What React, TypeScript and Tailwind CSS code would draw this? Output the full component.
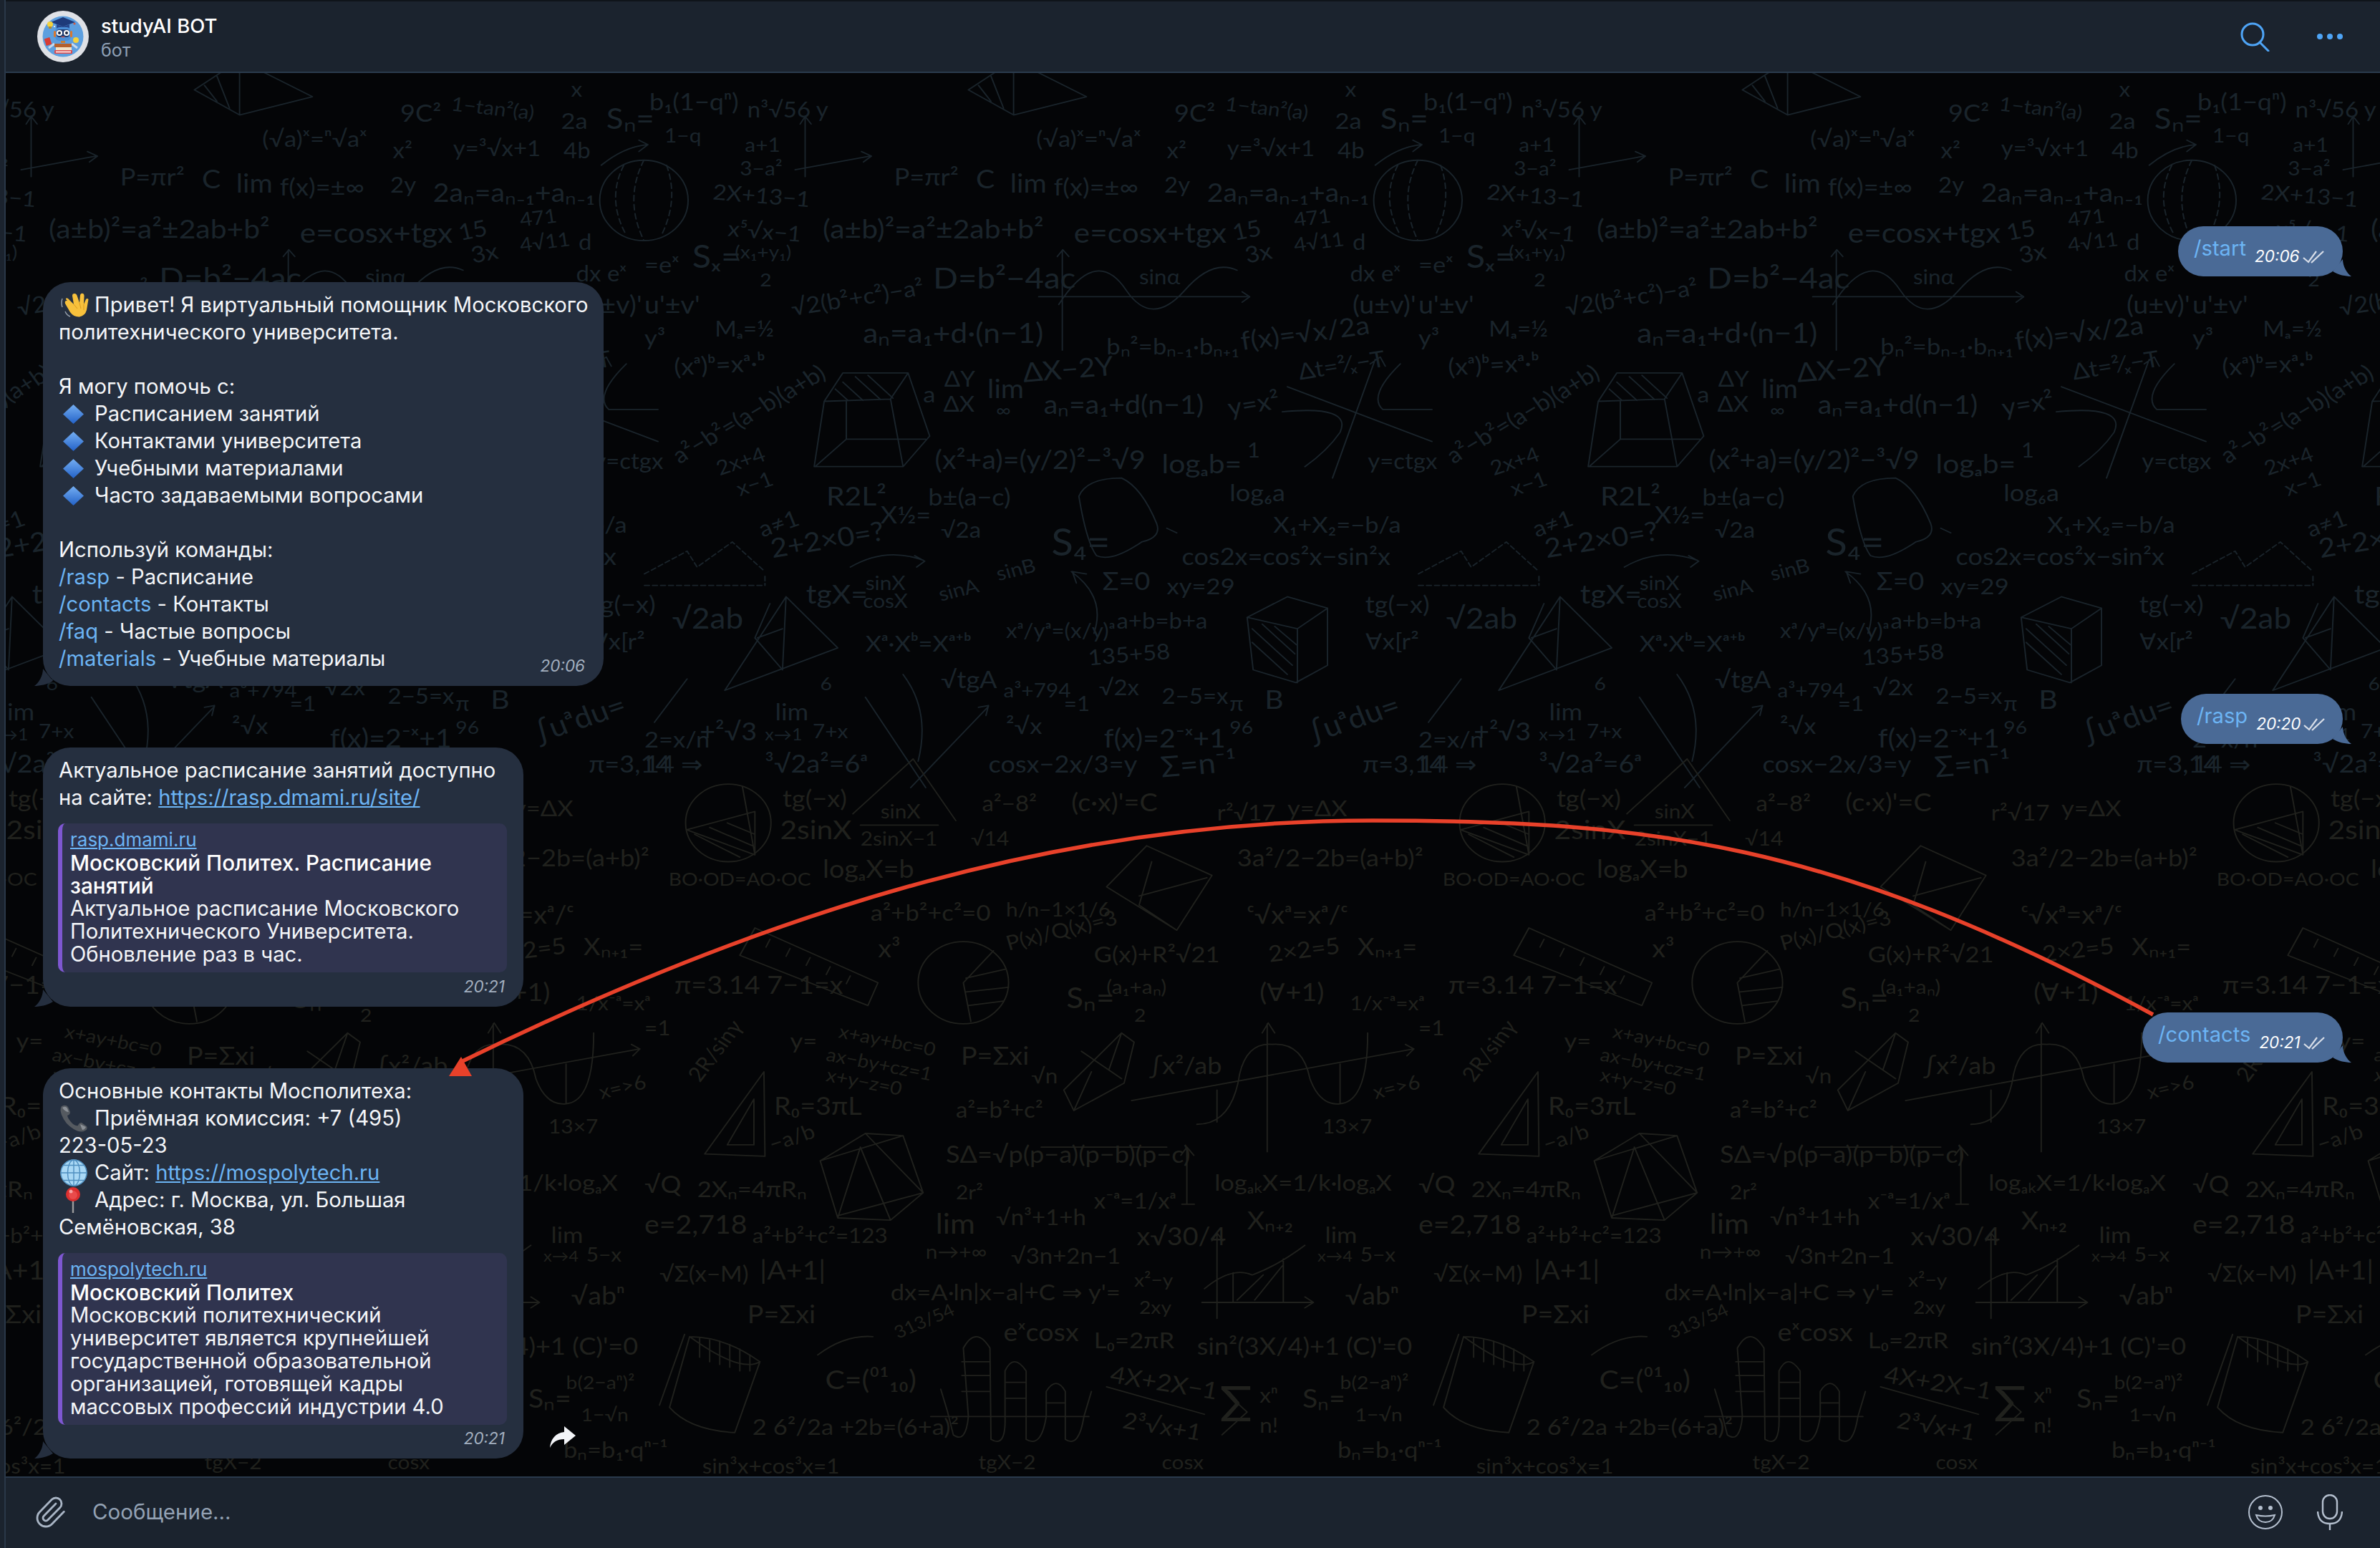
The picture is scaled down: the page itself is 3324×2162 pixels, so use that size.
import React from "react";
import { Paperclip } from "lucide-react";

type D = [number, number, string, number, number?];

const topItems: D[] = [
  [10,85,"b₁(1−qⁿ)",46],[205,100,"n³√56 y",42],[40,155,"1−q",38],[200,175,"a+1",38],[190,228,"3−a²",38],
  [135,280,"2X+13−1",42,5],[165,360,"x⁵√x−1",42,5],[497,250,"P=πr²",46],[660,255,"C",50],[728,265,"lim",50],
  [815,272,"f(x)=±∞",46],[780,165,"(√a)ˣ=ⁿ√aˣ",44],[1055,110,"9C²",46],[1155,85,"1−tan²(a)",38,7],[1160,185,"y=³√x+1",42],
  [1040,190,"x²",42],[1035,265,"2y",42],[1120,285,"2aₙ=aₙ₋₁+aₙ₋₁",50],[1395,55,"x",40],[1375,125,"2a",44],[1380,190,"4b",42],
  [1465,125,"Sₙ=",56],[355,365,"(a±b)²=a²±2ab+b²",52],[855,375,"e=cosx+tgx",54],[1175,370,"15",44,-12],[1200,420,"3x",44,-12],
  [1295,340,"471",38,-8],[1295,395,"4√11",38,-8],[1410,390,"d",42],[1405,460,"dx eˣ",42],[0,440,"=eˣ",44],[95,430,"Sₓ=",62],
  [180,410,"(x₁+y₁)",36],[230,470,"2",36],[575,475,"D=b²−4ac",58],[985,465,"sinα",40],[140,580,"Mₐ=½",42],
  [295,535,"√2(b²+c²)−a²",44,-10],[435,595,"aₙ=a₁+d·(n−1)",54],[920,620,"bₙ²=bₙ₋₁·bₙ₊₁",44],[1190,610,"f(x)=√x/2a",50,-8],
  [1410,530,"(u±v)'",48],[0,530,"u'±v'",48],[0,600,"y³",44],[60,665,"(xᵃ)ᵇ=xᵃ·ᵇ",46,-3],[70,860,"a²−b²=(a−b)(a+b)",44,-33],
  [555,725,"a",44],[597,690,"ΔY",42],[595,745,"ΔX",42],[683,715,"lim",50],[700,755,"∞",36],[755,680,"ΔX−2Y",52,-5],
  [795,750,"aₙ=a₁+d(n−1)",50],[1165,755,"y=x²",48,-10],[1305,675,"Δt=²⁄ₓ−T",44,-10],[578,870,"(x²+a)=(y/2)²−³√9",50],
  [1030,880,"logₐb=",52],[1200,845,"1",40],[1165,940,"log₆a",46],[1440,870,"y=ctgx",42],[150,885,"2x+4",40,-20],[190,930,"x−1",40,-20],
  [362,950,"R2L²",52],[470,990,"X½=",46],[565,950,"b±(a−c)",46],[590,1020,"√2a",42],[255,1065,"2+2×0=?",52,-10],[235,1020,"a≠1",44,-20],
  [810,1060,"S₄=",72],[1252,1010,"X₁+X₂=−b/a",44],[1070,1080,"cos2x=cos²x−sin²x",46],[912,1135,"Σ=0",48],[1040,1145,"xy=29",44],
  [940,1220,"a+b=b+a",42],[322,1165,"tgX=",52],[440,1135,"sinX",38],[435,1175,"cosX",38],[590,1160,"sinA",38,-15],[705,1115,"sinB",38,-15],
  [440,1270,"Xᵃ·Xᵇ=Xᵃ⁺ᵇ",44],[720,1240,"xᵃ/yᵃ=(x/y)ᵃ",40],[885,1300,"135+58",42,-5],[905,1365,"√2x",42],[715,1370,"a³+794",38],[835,1400,"=1",40],
  [720,1450,"²√x",44],[590,1350,"√tgA",46],[1030,1385,"2−5=x",42],[915,1480,"f(x)=2⁻ˣ+1",50],[1165,1400,"π",40],[1165,1450,"96",36],
  [1235,1395,"B",52],[1330,1470,"∫uᵃdu=",56,-20],[1435,1185,"tg(−x)",46],[1435,1265,"∀x[r²",44],[55,1220,"√2ab",56],[260,1420,"lim",46],
  [240,1465,"x→1",32],[350,1355,"6",36],[335,1460,"7+x",38],[110,1465,"+²√3",48],[0,1535,"14 ⇒",46],[240,1535,"³√2a²=6ᵃ",48],[685,1535,"cosx−2x/3=y",46],
  [1030,1545,"Σ=n⁻¹",56,-5],[1430,1535,"π=3,14",46],[0,1480,"2=x/n",44],
];

const bottomItems: D[] = [
  [275,105,"tg(−x)",46],[270,175,"2sinX",52],[470,130,"sinX",38],[430,190,"2sinX−1",38],[672,115,"a²−8²",42],[850,115,"(c·x)'=C",48],
  [1140,135,"r²√17",42],[1280,125,"y=ΔX",44],[48,278,"BO·OD=AO·OC",36],[355,260,"logₐX=b",48],[650,190,"√14",38],[1180,235,"3a²/2−2b=(a+b)²",46],
  [720,345,"h/n−1×1/6",38],[450,355,"a²+b²+c²=0",44],[1200,360,"ᶜ√xᵃ=xᵃ/ᶜ",48],[465,435,"x³",48],[60,515,"π=3.14 7−1=x",48],[725,420,"P(x)/Q(x)=3",40,-15],
  [895,445,"G(x)+R²√21",44],[1245,445,"2×2=5",44,-8],[1420,430,"Xₙ₊₁=",46],[840,545,"Sₙ=",56],[920,515,"(a₁+aₙ)",38],[975,575,"2",36],
  [1225,530,"(∀+1)",48],[1405,550,"1/x⁻ᵃ=xᵃ",38],[0,605,"=1",40],[110,710,"2R/sinγ",40,-55],[290,635,"y=",44],[385,610,"x+ay+bc=0",36,12],
  [360,660,"ax−by+cz=1",36,12],[360,705,"x+y−z=0",36,12],[630,670,"P=Σxi",48],[770,710,"√n",40],[1005,690,"∫x²/ab",46],[620,785,"a²=b²+c²",42],
  [1455,745,"x=>6",38,-15],[258,780,"R₀=3πL",48],[255,860,"−a/b",40,-20],[1350,820,"13×7",38],[600,885,"SΔ=√p(p−a)(p−b)(p−c)",46],
  [1135,945,"logₐₖX=1/k·logₐX",44],[0,950,"√Q",46],[105,960,"2Xₙ=4πRₙ",44],[620,965,"2r²",38],[895,985,"x⁻ᵃ=1/xᵃ",42],[0,1040,"e=2,718",50],
  [215,1060,"a²+b²+c²=123",40],[580,1040,"lim",54],[700,1020,"√n³+1+h",42],[560,1095,"n→+∞",38],[730,1105,"√3n+2n−1",42],[980,1065,"x√30/4",48],
  [1200,1030,"Xₙ₊₂",48],[1355,1060,"lim",44],[1340,1100,"x→4",30],[1425,1100,"5−x",38],[30,1145,"√Σ(x−M)",42],[230,1140,"|A+1|",50],
  [490,1185,"dx=A·ln|x−a|+C ⇒ y'=",44],[975,1155,"x²−y",36],[985,1215,"2xy",36],[1395,1195,"√abⁿ",48],[205,1235,"P=Σxi",48],[715,1275,"eˣcosx",48],
  [895,1290,"L₀=2πR",44],[1100,1305,"sin²(3X/4)+1 (C)'=0",46],[360,1380,"C=(⁰¹₁₀)",52],[505,1270,"313/54",34,-25],[925,1365,"4X+2X−1",46,10],
  [950,1465,"2³√x+1",44,10],[1145,1450,"Σ",96],[1225,1410,"xⁿ",40],[1225,1475,"n!",40],[1310,1420,"Sₙ=",50],[1385,1380,"b(2−aⁿ)²",36],[1415,1450,"1−√n",36],
  [215,1480,"2 6²/2a +2b=(6+a)²",44],[1380,1530,"bₙ=b₁·qⁿ⁻¹",44],[115,1565,"sin³x+cos³x=1",40],[665,1555,"tgX−2",38],[1030,1555,"cosx",38],
];

function Texts({ items, color }: { items: D[]; color: string }) {
  return (
    <g fill={color} stroke="none" fontFamily="Lato, sans-serif" fontWeight={400}>
      {items.map(([x, y, s, size, r], i) => (
        <text key={i} x={x} y={y} fontSize={size * 1.12} transform={r ? `rotate(${r} ${x} ${y})` : undefined}>
          {s}
        </text>
      ))}
    </g>
  );
}

function Tile() {
  return (
    <>
      <g transform="translate(0,-2) scale(0.7015,0.6378)" stroke="#1a242b" strokeWidth={2.8} fill="none" strokeLinecap="round" strokeLinejoin="round">
        <Texts items={topItems} color="#1a242b" />
        <circle cx="1540" cy="282" r="88" />
        <path d="M1540 194 Q1500 280 1540 370 M1500 205 Q1465 280 1505 358 M1585 205 Q1610 280 1575 358" strokeDasharray="12 8" />
        <path d="M1455 205 Q1500 165 1545 160 M1530 150 L1548 160 L1530 175" />
        <path d="M645 40 L735 -25 L880 55 L735 95 Z M735 -25 L735 95 M665 30 L690 65 M690 10 L715 80" />
        <path d="M320 230 V100 M310 115 L320 98 L332 115 M300 215 L450 185 M432 175 L452 185 L436 198" />
        <path d="M395 660 H525 L490 717 L358 722 Z M358 722 L338 865 H515 L568 798 L525 660 M490 717 L515 865 M402 722 V805 H560 M402 805 L340 865" />
        <path d="M420 668 L470 718 M445 665 L495 715 M395 680 L435 720 M380 695 L405 720" />
        <path d="M785 493 H1200 M1190 482 L1205 493 L1190 505 M832 610 V392 M822 405 L833 390 L845 405 M825 510 Q900 380 960 480 Q1010 560 1075 480 Q1130 410 1180 435" />
        <path d="M1280 690 L1568 810 M1455 630 L1370 890 M1445 640 L1465 625 L1475 645 M1270 745 Q1410 730 1385 790 Q1360 830 1315 865 M1505 640 Q1440 710 1470 740 H1568" />
        <path d="M865 930 Q880 890 950 890 Q990 910 1020 990 Q1030 1020 990 1030 Q930 1075 900 1060 Q880 1030 865 930 Z" />
        <path d="M0 1125 H240 M240 1105 V1125 M0 1100 L85 1050 L105 1085 L175 1030 L240 1095" strokeDasharray="10 6" />
        <path d="M410 1085 Q480 1040 555 1070 M538 1060 L558 1072 L542 1085 M850 1095 Q920 1150 895 1230 M852 1095 L880 1100 M852 1095 L860 1120" />
        <path d="M282 1150 L385 1262 L160 1355 Z M282 1150 L275 1310 M250 1165 L220 1240 L275 1310 M225 1240 L275 1220" />
        <path d="M1200 1195 L1280 1150 L1360 1175 L1300 1220 Z M1200 1195 L1212 1310 L1297 1338 L1360 1300 V1175 M1300 1220 V1338" />
        <path d="M1210 1220 L1290 1300 M1210 1250 L1280 1320 M1230 1210 L1295 1275 M1255 1215 L1298 1255" />
        <path d="M440 1370 L560 1568 M530 1568 L685 1390 M665 1392 L685 1388 L680 1410 M515 1320 Q570 1400 545 1510" />
        <path d="M20 1425 L85 1330 M1040 1000 L1060 1010" />
      </g>
      <g transform="translate(0,958) scale(0.7015,0.6378)" stroke="#20211d" strokeWidth={2.8} fill="none" strokeLinecap="round" strokeLinejoin="round">
        <Texts items={bottomItems} color="#20211d" />
        <circle cx="167" cy="140" r="85" />
        <path d="M84 155 L220 115 V210 Z M100 165 L190 215 M130 150 L215 190 M165 140 L220 165 M195 60 L220 210" />
        <path d="M415 120 L535 0 L620 135 M430 145 H585" />
        <path d="M920 280 L1000 190 M1000 190 L1130 255 L1060 375 L920 280 M985 300 L1120 260 M1010 225 L985 320 L1060 375" />
        <circle cx="635" cy="490" r="90" />
        <path d="M635 490 L695 420 M635 490 L650 575 M640 480 L720 460 M640 510 L725 500 M645 540 L715 530" />
        <path d="M190 430 L220 370 L465 490 L445 540 Z M250 395 L242 412 M290 415 L282 432 M330 435 L322 452 M370 455 L362 472 M410 475 L402 492" />
        <path d="M120 865 L238 685 L240 870 Z M165 845 L218 745 L218 845 Z" />
        <path d="M835 725 L950 600 L975 620 L955 710 L855 770 Z M870 640 L950 700 M950 600 L925 680 M855 770 L890 685" />
        <path d="M970 748 L1530 635 M1515 625 L1532 635 L1518 650 M1240 860 V580 M1230 600 L1242 578 L1255 600 M1100 800 Q1170 800 1185 690 Q1200 620 1250 625 Q1310 620 1325 700 Q1345 760 1385 755 Q1440 750 1440 600 M1140 725 L1140 795 M1385 668 V755" />
        <path d="M350 880 L440 820 L515 825 L555 950 L490 1010 L385 1005 Z M430 850 L385 1005 M430 850 L490 1010 M440 820 L555 950 M385 1000 L555 950 M515 825 L350 880" />
        <path d="M1080 850 V975 M1068 868 L1080 850 L1094 868 M1070 975 H1095" />
        <path d="M1110 1190 H1330 M1315 1178 L1332 1190 L1315 1202 M1140 1040 V1225 M1130 1055 L1140 1038 L1152 1055 M1115 1160 Q1170 1110 1210 1130 Q1260 1110 1315 1065 M1172 1125 V1188 M1272 1095 V1188 M1180 1185 L1232 1130 M1215 1185 L1270 1110" />
        <path d="M90 1265 Q160 1265 230 1320 Q190 1345 90 1265 M90 1265 L50 1420 Q90 1470 180 1475 L230 1320 M30 1415 L80 1260" />
        <path d="M110 1268 V1310 M130 1272 V1320 M150 1275 V1326 M170 1282 V1332 M190 1292 V1340 M210 1305 V1340" />
        <path d="M570 1440 H885 M590 1380 Q605 1430 615 1480 Q640 1500 645 1440 L635 1290 Q660 1240 688 1290 L690 1490 Q720 1510 718 1440 V1340 Q735 1300 760 1340 V1490 Q790 1510 800 1440 V1385 Q820 1350 838 1385 V1490 Q865 1510 875 1440 L890 1385" />
        <path d="M632 1320 H688 M632 1350 H688 M632 1385 H688 M720 1365 H760 M720 1400 H760 M800 1410 H838" />
        <path d="M920 1375 L1115 1435 M1150 1380 L1200 1430 L1150 1480 M345 1305 Q400 1260 455 1265 M1040 850 H790" />
      </g>
    </>
  );
}

function Wave() {
  return (
    <svg viewBox="0 0 40 34" className="w-[40px] h-[34px]">
      <path d="M3 8 Q1 14 3 20 M7 26 Q9 31 14 33" stroke="#9aa3ad" strokeWidth="1.4" fill="none" />
      <path d="M11 8 L19 16 L17 4 Q17 1 20 1 Q23 1 24 5 L27 14 L28 3 Q29 0 32 1 Q34 2 33.5 6 L33 16 L36 9 Q38 7 39.5 9 L37 24 Q35 32 27 33.5 Q19 34 14 27 L7 15 Q6 11 9 11 Q12 11 15 16 L8 9 Q8 6 11 8 Z" fill="#f8c13c" />
      <path d="M19 16 L24 22 M27 14 L29 22 M33 16 L33 24" stroke="#d99a1e" strokeWidth="1" fill="none" />
    </svg>
  );
}
function Diamond() {
  return (
    <svg viewBox="0 0 29 27" className="w-[29px] h-[27px]">
      <defs>
        <linearGradient id="dia" x1="0" y1="0" x2="0" y2="1">
          <stop offset="0" stopColor="#74aef2" />
          <stop offset="1" stopColor="#2362c8" />
        </linearGradient>
      </defs>
      <path d="M14.5 0 L29 13.5 L14.5 27 L0 13.5 Z" fill="url(#dia)" />
    </svg>
  );
}
function Phone() {
  return (
    <svg viewBox="0 0 40 38" className="w-[40px] h-[38px]">
      <path d="M3 2 Q9 -1 12 3 L15 10 Q15 14 11 15 Q12 20 18 26 Q23 30 26 29 Q27 25 31 25 L38 30 Q40 34 36 36 Q30 40 20 34 Q8 27 3 14 Q0 6 3 2 Z" fill="#555a60" />
      <path d="M4 4 Q9 1 11 5 L13 10 Q8 10 4 4 Z M29 27 L37 31 Q35 35 32 35 Q30 31 29 27 Z" fill="#8b9096" />
    </svg>
  );
}
function Globe() {
  return (
    <svg viewBox="0 0 40 40" className="w-[40px] h-[38px]">
      <circle cx="20" cy="20" r="19.5" fill="#a9d8f5" />
      <g fill="none" stroke="#4f8fc0" strokeWidth="1.5">
        <circle cx="20" cy="20" r="19" />
        <ellipse cx="20" cy="20" rx="9" ry="19" />
        <path d="M20 1 V39 M1 20 H39 M5 9 H35 M5 31 H35" />
      </g>
    </svg>
  );
}
function Pin() {
  return (
    <svg viewBox="0 0 24 36" className="w-[24px] h-[36px]">
      <path d="M12 18 V36" stroke="#9c9c9c" strokeWidth="2.4" />
      <circle cx="12" cy="10" r="10" fill="#db2f2f" />
      <circle cx="12" cy="11" r="6" fill="#e94b4b" />
      <circle cx="9" cy="6" r="2.5" fill="#f6a3a3" />
    </svg>
  );
}

function Emoji({ children, pad = 1 }: { children: React.ReactNode; pad?: number }) {
  return (
    <span className="inline-flex w-[50px] h-[38px] items-center justify-start align-top" style={{ paddingLeft: pad }}>
      {children}
    </span>
  );
}

function Avatar() {
  return (
    <svg viewBox="0 0 72 72" className="w-[72px] h-[72px] shrink-0">
      <circle cx="36" cy="36" r="36" fill="#dfe1e6" />
      <circle cx="36" cy="36" r="28.5" fill="#5d9fdf" />
      <circle cx="24" cy="22" r="1" fill="#fff" />
      <circle cx="52" cy="18" r="1.6" fill="#d4583f" />
      <path d="M36 9 L53 16 L36 22 L19 16 Z" fill="#1e3a7a" />
      <path d="M27 19 V25 H45 V19 L36 22 Z" fill="#27468c" />
      <circle cx="18" cy="19" r="4" fill="#f4d23c" />
      <path d="M16 22 H20 V25 H16 Z" fill="#b28a2d" />
      <rect x="25" y="23" width="22" height="19" rx="6" fill="#4a8fd8" />
      <rect x="23" y="28" width="3" height="9" rx="1.5" fill="#d9782f" />
      <rect x="46" y="28" width="3" height="9" rx="1.5" fill="#d9782f" />
      <rect x="27" y="26" width="18" height="11" rx="4" fill="#1f3b70" />
      <circle cx="31" cy="31" r="4" fill="#fff" />
      <circle cx="41" cy="31" r="4" fill="#fff" />
      <circle cx="31" cy="31" r="2" fill="#18233d" />
      <circle cx="41" cy="31" r="2" fill="#18233d" />
      <path d="M33 36 Q36 39 39 36 Z" fill="#e2594c" />
      <rect x="33" y="42" width="6" height="3" fill="#c97f32" />
      <rect x="11" y="38" width="8" height="10" transform="rotate(-18 15 43)" fill="#d73c35" />
      <circle cx="54" cy="41" r="4" fill="#f4d23c" />
      <path d="M16 52 L24 46 M56 52 L48 46" stroke="#c9d9ea" strokeWidth="3" />
      <rect x="24" y="46" width="24" height="5" rx="1" fill="#b5602c" />
      <rect x="26" y="51" width="22" height="4" fill="#f2e3c7" />
      <rect x="24" y="55" width="25" height="5" rx="1" fill="#d84c50" />
      <rect x="26" y="56.5" width="21" height="2" fill="#f7dada" />
    </svg>
  );
}

function Checks() {
  return (
    <svg viewBox="0 0 30 18" className="w-[30px] h-[18px]" fill="none" stroke="#d8dee8" strokeWidth="2.2">
      <path d="M1 10 L8 16 L19 1" />
      <path d="M12 17 L29 1" />
    </svg>
  );
}

function OutBubble({ text, time, className }: { text: string; time: string; className: string }) {
  return (
    <div className={`self-end relative h-[70px] rounded-[35px] bg-[#4a6a96] pl-[22px] pt-[12px] flex ${className}`}>
      <span className="text-[#6cb4f4] text-[29.2px] leading-[38px] whitespace-nowrap">{text}</span>
      <span className="ml-[12px] mt-[18px] flex items-start gap-[4px] h-[24px]">
        <span className="text-white italic text-[22.5px] leading-[24px]">{time}</span>
        <span className="mt-[4px]"><Checks /></span>
      </span>
      <svg viewBox="0 0 30 24" className="absolute right-[-12px] bottom-0 w-[30px] h-[24px]">
        <path d="M18 0 C18 10 24 20 30 24 C22 24 12 22 4 17 Z" fill="#4a6a96" />
      </svg>
    </div>
  );
}

function InBubble({ children, time, className }: { children: React.ReactNode; time: string; className: string }) {
  return (
    <div className={`self-start relative rounded-[38px] bg-[#252f3f] text-[#f4f6f9] text-[29.2px] leading-[38px] whitespace-nowrap ${className}`}>
      {children}
      <span className="absolute right-[26px] bottom-[16px] italic text-[22.5px] leading-[24px] text-[#a3afbf]">{time}</span>
      <svg viewBox="0 0 30 24" className="absolute left-[-12px] bottom-0 w-[30px] h-[24px]">
        <path d="M12 0 C12 10 6 20 0 24 C8 24 18 22 26 17 Z" fill="#252f3f" />
      </svg>
    </div>
  );
}

function Cmd({ c }: { c: string }) {
  return <span className="text-[#6cb4f4]">{c}</span>;
}

function Preview({ domain, title, lines, h }: { domain: string; title: string[]; lines: string[]; h: string }) {
  return (
    <div className={`mt-[16px] ml-[-1px] w-[627px] rounded-[10px] bg-[#30344f] border-l-[6px] border-[#7e57d1] pl-[11px] pt-[7px] text-[29.2px] leading-[32px] text-[#f4f6f9] ${h}`}>
      <div className="text-[26px] text-[#6cb4f4] underline">{domain}</div>
      {title.map((t) => (
        <div key={t} className="text-[29.7px] font-medium text-white">{t}</div>
      ))}
      {lines.map((t) => (
        <div key={t}>{t}</div>
      ))}
    </div>
  );
}

export default function App() {
  return (
    <div className="relative w-[3324px] h-[2162px] flex bg-[#1b232e] overflow-hidden font-['Inter','Noto_Sans',sans-serif]">
      <div className="w-[8px] shrink-0 bg-[#1b232e] border-r-2 border-[#2a3848]" />
      <div className="flex-1 flex flex-col min-w-0">
        <div className="h-[2px] bg-[#0f141a]" />
        <header className="h-[100px] shrink-0 bg-[#1b232e] border-b-2 border-[#2a3a4c] flex items-center pl-[44px] pr-[52px]">
          <Avatar />
          <div className="ml-[17px] flex flex-col pt-[2px]">
            <span className="text-white text-[27.5px] leading-[34px] font-medium">studyAI BOT</span>
            <span className="text-[#8fa0b5] text-[25px] leading-[30px] mt-[2px]">бот</span>
          </div>
          <svg viewBox="0 0 41 41" className="ml-auto w-[41px] h-[41px] text-[#4ea4f6]" fill="none" stroke="currentColor" strokeWidth="3" strokeLinecap="round">
            <circle cx="17" cy="17" r="15" />
            <path d="M27 28 L39 40" />
          </svg>
          <svg viewBox="0 0 36 8" className="ml-[66px] w-[36px] h-[8px] text-[#4ea4f6]" fill="currentColor">
            <circle cx="4" cy="4" r="4" />
            <circle cx="18" cy="4" r="4" />
            <circle cx="32" cy="4" r="4" />
          </svg>
        </header>

        <main className="relative flex-1 min-h-0 bg-[#040507] overflow-hidden flex flex-col justify-end pl-[52px] pr-[52px] pb-[25px]">
          <svg className="absolute inset-0 w-full h-full" aria-hidden="true">
            <defs>
              <g id="tile"><Tile /></g>
            </defs>
            <use href="#tile" x={-189} />
            <use href="#tile" x={892} />
            <use href="#tile" x={1973} />
            <use href="#tile" x={3054} />
          </svg>

          <OutBubble text="/start" time="20:06" className="w-[230px]" />

          <InBubble time="20:06" className="mt-[8px] w-[783px] h-[564px] pl-[22px] pt-[13px]">
            <div><Emoji pad={2}><Wave /></Emoji>Привет! Я виртуальный помощник Московского</div>
            <div>политехнического университета.</div>
            <div className="h-[38px]" />
            <div>Я могу помочь с:</div>
            <div><Emoji pad={6}><Diamond /></Emoji>Расписанием занятий</div>
            <div><Emoji pad={6}><Diamond /></Emoji>Контактами университета</div>
            <div><Emoji pad={6}><Diamond /></Emoji>Учебными материалами</div>
            <div><Emoji pad={6}><Diamond /></Emoji>Часто задаваемыми вопросами</div>
            <div className="h-[38px]" />
            <div>Используй команды:</div>
            <div><Cmd c="/rasp" /> - Расписание</div>
            <div><Cmd c="/contacts" /> - Контакты</div>
            <div><Cmd c="/faq" /> - Частые вопросы</div>
            <div><Cmd c="/materials" /> - Учебные материалы</div>
          </InBubble>

          <OutBubble text="/rasp" time="20:20" className="mt-[11px] w-[226px]" />

          <InBubble time="20:21" className="mt-[5px] w-[671px] h-[362px] pl-[22px] pt-[13px]">
            <div>Актуальное расписание занятий доступно</div>
            <div>на сайте: <span className="text-[#6cb4f4] underline">https://rasp.dmami.ru/site/</span></div>
            <div className="h-[1px]" />
            <Preview
              domain="rasp.dmami.ru"
              title={["Московский Политех. Расписание", "занятий"]}
              lines={["Актуальное расписание Московского", "Политехнического Университета.", "Обновление раз в час."]}
              h="h-[208px]"
            />
          </InBubble>

          <OutBubble text="/contacts" time="20:21" className="mt-[8px] w-[280px]" />

          <div className="relative self-start mt-[8px]">
            <InBubble time="20:21" className="w-[671px] h-[545px] pl-[22px] pt-[13px]">
              <div>Основные контакты Мосполитеха:</div>
              <div><Emoji><Phone /></Emoji>Приёмная комиссия: +7 (495)</div>
              <div>223-05-23</div>
              <div><Emoji><Globe /></Emoji>Сайт: <span className="text-[#6cb4f4] underline">https://mospolytech.ru</span></div>
              <div><Emoji pad={8}><Pin /></Emoji>Адрес: г. Москва, ул. Большая</div>
              <div>Семёновская, 38</div>
              <div className="h-[1px]" />
              <Preview
                domain="mospolytech.ru"
                title={["Московский Политех"]}
                lines={["Московский политехнический", "университет является крупнейшей", "государственной образовательной", "организацией, готовящей кадры", "массовых профессий индустрии 4.0"]}
                h="h-[240px]"
              />
            </InBubble>
            <svg viewBox="0 0 36 30" className="absolute left-[708px] bottom-[15px] w-[36px] h-[30px]" fill="#f2f4f7">
              <path d="M20 0 L36 13 L20 26 V18 C10 18 4 22 0 30 C1 18 8 9 20 8 Z" />
            </svg>
          </div>
        </main>

        <footer className="h-[100px] shrink-0 bg-[#1b232e] border-t-2 border-[#2a3a4c] flex items-center pl-[38px] pr-[52px] pb-[3px]">
          <Paperclip className="w-[48px] h-[48px] text-[#a9b5c5]" strokeWidth={1.4} />
          <span className="ml-[35px] text-[29.5px] text-[#94a2b4]">Сообщение...</span>
          <svg viewBox="0 0 48 48" className="ml-auto w-[48px] h-[48px] text-[#b4bfce]" fill="none" stroke="currentColor" strokeWidth="2">
            <circle cx="24" cy="24" r="23" />
            <circle cx="17" cy="18" r="3" fill="currentColor" stroke="none" />
            <circle cx="31" cy="18" r="3" fill="currentColor" stroke="none" />
            <path d="M11 28 Q24 31 37 28 Q34 38 24 38 Q14 38 11 28 Z" />
          </svg>
          <svg viewBox="0 0 36 50" className="ml-[48px] w-[36px] h-[50px] text-[#b4bfce]" fill="none" stroke="currentColor" strokeWidth="2.4">
            <rect x="8" y="1" width="20" height="33" rx="10" />
            <path d="M1 24 Q2 41 18 41 Q34 41 35 24 M18 41 V50" />
          </svg>
        </footer>
      </div>

      <svg className="absolute inset-0 w-full h-full pointer-events-none" viewBox="0 0 3324 2162" fill="none" aria-hidden="true">
        <path d="M3007 1417 C2560 1175 2300 1146 1917 1146 C1500 1146 1100 1260 644 1483" stroke="#e8412a" strokeWidth="5.5" />
        <polygon points="627,1503 659,1503 644,1476" fill="#e8412a" />
      </svg>
    </div>
  );
}
